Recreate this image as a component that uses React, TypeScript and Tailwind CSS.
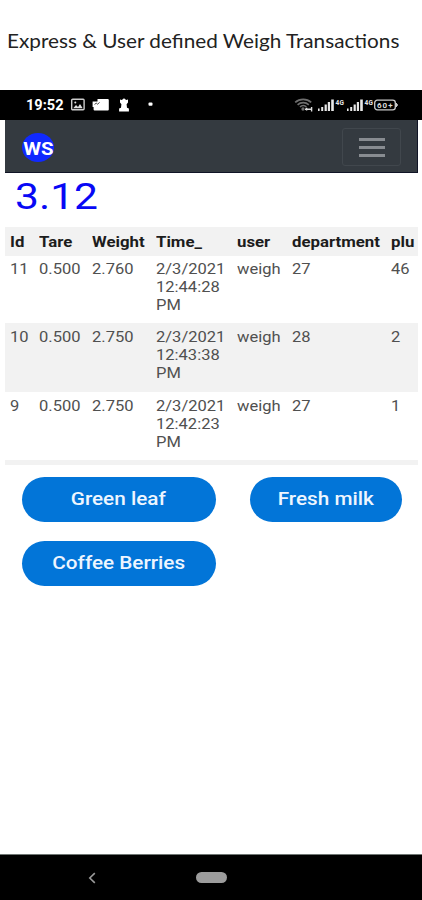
import type { ReactNode } from "react";

const columns = ["Id", "Tare", "Weight", "Time_", "user", "department", "plu"];

const transactions = [
  ["11", "0.500", "2.760", ["2/3/2021", "12:44:28", "PM"], "weigh", "27", "46"],
  ["10", "0.500", "2.750", ["2/3/2021", "12:43:38", "PM"], "weigh", "28", "2"],
  ["9", "0.500", "2.750", ["2/3/2021", "12:42:23", "PM"], "weigh", "27", "1"],
];

const rowGrid =
  "grid grid-cols-[29px_53px_64px_81px_55px_99px_27px] pl-[5px]";

// Wide text, anchored on its left edge
const Wide = ({ children, className = "" }: { children: ReactNode; className?: string }) => (
  <span className={`block w-max origin-left whitespace-nowrap ${className}`}>{children}</span>
);

const Signal = () => (
  <svg className="h-[13px] w-[27px]" viewBox="0 0 27 13" fill="#e8e8e8">
    <rect x="0" y="9.5" width="1.6" height="2.5" />
    <rect x="3.2" y="8" width="2" height="4" />
    <rect x="6.6" y="5.5" width="2.2" height="6.5" />
    <rect x="9.8" y="3" width="2.2" height="9" />
    <rect x="13.2" y="0.5" width="2.6" height="11.5" />
    <text x="17.5" y="5.5" fontSize="6.5" fontWeight="700" fontFamily="Roboto, sans-serif" textLength="8.5">
      4G
    </text>
  </svg>
);

const StatusBar = () => (
  <div className="flex h-[30px] items-center bg-black pl-[26px] text-white">
    <div className="w-[44px] text-[14px] font-bold leading-[30px]">
      <Wide className="scale-x-[1.04]">19:52</Wide>
    </div>
    <svg className="h-[14px] w-[84px]" viewBox="0 0 84 14">
      <rect x="1.7" y="1.2" width="12.4" height="10.6" rx="1" fill="none" stroke="#ccc" strokeWidth="1.4" />
      <path d="M3.2 10.3l2.8-3.4 2 2 2-2.8 2.7 4.2z" fill="#ddd" />
      <circle cx="5.3" cy="4.4" r="1" fill="#ddd" />
      <path d="M27.5 1h10.3q1 0 1 1v9.4q0 1-1 1H24.6q-1 0-1-1V9h-1V3.4h4.9z" fill="#fff" />
      <path d="M24.5 6.4l1.8-1.2 1.3 1 2-1.8" fill="none" stroke="#333" strokeWidth=".9" />
      <path
        d="M50 1.4l1.8.6L54 .2 56.2 2l1.8-.6v3.2l-1.4 1.6.4 3.6 1.9.8v2.8h-9.8v-2.8l1.9-.8.4-3.6L50 4.6z"
        fill="#fff"
      />
      <rect x="78.5" y="4.6" width="4" height="3.2" rx="1" fill="#fff" />
    </svg>
    <div className="ml-auto mr-[24px] flex items-center">
      <svg className="mr-[4px] h-[14px] w-[20px]" viewBox="0 0 20 14" fill="none" stroke="#6e6e6e" strokeWidth="1.7">
        <path d="M1.2 4.4a12 12 0 0 1 16 0" />
        <path d="M3.6 6.8a8.2 8.2 0 0 1 11.2 0" />
        <path d="M6 9a4.6 4.6 0 0 1 6.4 0" />
        <circle cx="9" cy="11" r=".8" fill="#6e6e6e" />
        <path d="M11 11.2h6M12.6 9.8v2.8M17.6 9v4.4" stroke="#ddd" strokeWidth="1.4" />
      </svg>
      <div className="mr-[2px]">
        <Signal />
      </div>
      <Signal />
      <svg className="h-[12px] w-[24px]" viewBox="0 0 24 12">
        <rect x=".7" y="1.2" width="20.6" height="9.6" rx="2.6" fill="none" stroke="#ccc" strokeWidth="1.3" />
        <path d="M22 4l1.6 2L22 8z" fill="#ccc" stroke="#ccc" />
        <text x="3" y="9" fontSize="8" fontWeight="700" fill="#ddd" fontFamily="Roboto, sans-serif" textLength="15.5">
          60+
        </text>
      </svg>
    </div>
  </div>
);

const Navbar = () => (
  <div className="ml-[5px] mr-[4.5px] flex h-[53px] items-center justify-between border-b-[1.5px] border-r border-[#101426] bg-[#343a40] pl-[17px] pr-[15.5px]">
    <div className="mt-[2px] flex h-[29px] w-[32px] items-center justify-center rounded-[50%] bg-[#1029ff] pt-[3px] text-[18px] font-bold text-white">
      <span className="scale-x-[1.13]">WS</span>
    </div>
    <div className="mt-[2px] flex h-[38px] w-[59px] flex-col items-center justify-center gap-[5px] rounded-[3px] border border-[#41474d]">
      <div className="h-[3px] w-[26px] bg-[#888c91]" />
      <div className="h-[3px] w-[26px] bg-[#888c91]" />
      <div className="h-[3px] w-[26px] bg-[#888c91]" />
    </div>
  </div>
);

const TransactionTable = () => (
  <div className="ml-[5px] mr-[4px] border-b-[5px] border-[#f2f2f2] text-[14px] leading-[18px] text-[#505050]">
    <div className={`${rowGrid} h-[29px] bg-[#f2f2f2] pt-[6px] font-bold text-[#1c1c1c]`}>
      {columns.map((name) => (
        <Wide key={name} className="scale-x-[1.2]">
          {name}
        </Wide>
      ))}
    </div>
    {transactions.map((row, i) => (
      <div
        key={i}
        className={`${rowGrid} ${i === 0 ? "h-[67px] pt-[4px]" : i === 1 ? "h-[69px] bg-[#f2f2f2] pt-[5px]" : "h-[68px] pt-[5px]"}`}
      >
        {row.map((cell, j) => (
          <div key={j}>
            {(Array.isArray(cell) ? cell : [cell]).map((line) => (
              <Wide key={line} className="scale-x-[1.18]">
                {line}
              </Wide>
            ))}
          </div>
        ))}
      </div>
    ))}
  </div>
);

const ProductButton = ({ label, className }: { label: string; className: string }) => (
  <button
    className={`flex h-[45px] items-center justify-center rounded-full bg-[#0275d8] pb-[2px] text-[18px] font-medium text-[#eef6ff] ${className}`}
  >
    <span className="block scale-x-[1.15] whitespace-nowrap">{label}</span>
  </button>
);

const App = () => {
  return (
    <div className="flex h-[900px] w-[422px] flex-col overflow-hidden bg-white font-[Roboto,sans-serif]">
      <div className="h-[90px] pl-[7px] pt-[26px] font-[Lato,sans-serif] text-[20px] leading-[28px] text-[#222]">
        <Wide className="scale-x-[1.036]">Express &amp; User defined Weigh Transactions</Wide>
      </div>
      <StatusBar />
      <Navbar />
      <div className="h-[54px] pl-[15px] pt-[4px] text-[37px] leading-[40px] text-[#0808f5]">
        <Wide className="scale-x-[1.15]">3.12</Wide>
      </div>
      <TransactionTable />
      <div className="flex flex-wrap gap-x-[34px] gap-y-[19px] pl-[21.5px] pt-[12px]">
        <ProductButton label="Green leaf" className="w-[194px]" />
        <ProductButton label="Fresh milk" className="w-[152px]" />
        <ProductButton label="Coffee Berries" className="w-[194px]" />
      </div>
      <div className="mt-auto flex h-[46px] items-center border-t border-[#6f7673] bg-black pl-[88px]">
        <svg className="h-[12px] w-[8px]" viewBox="0 0 8 12" fill="none" stroke="#999" strokeWidth="1.6">
          <path d="M6.8 1.2L1.8 6l5 4.8" />
        </svg>
        <div className="ml-[100px] h-[11px] w-[31px] rounded-full bg-[#9c9c9c]" />
      </div>
    </div>
  );
};

export default App;
